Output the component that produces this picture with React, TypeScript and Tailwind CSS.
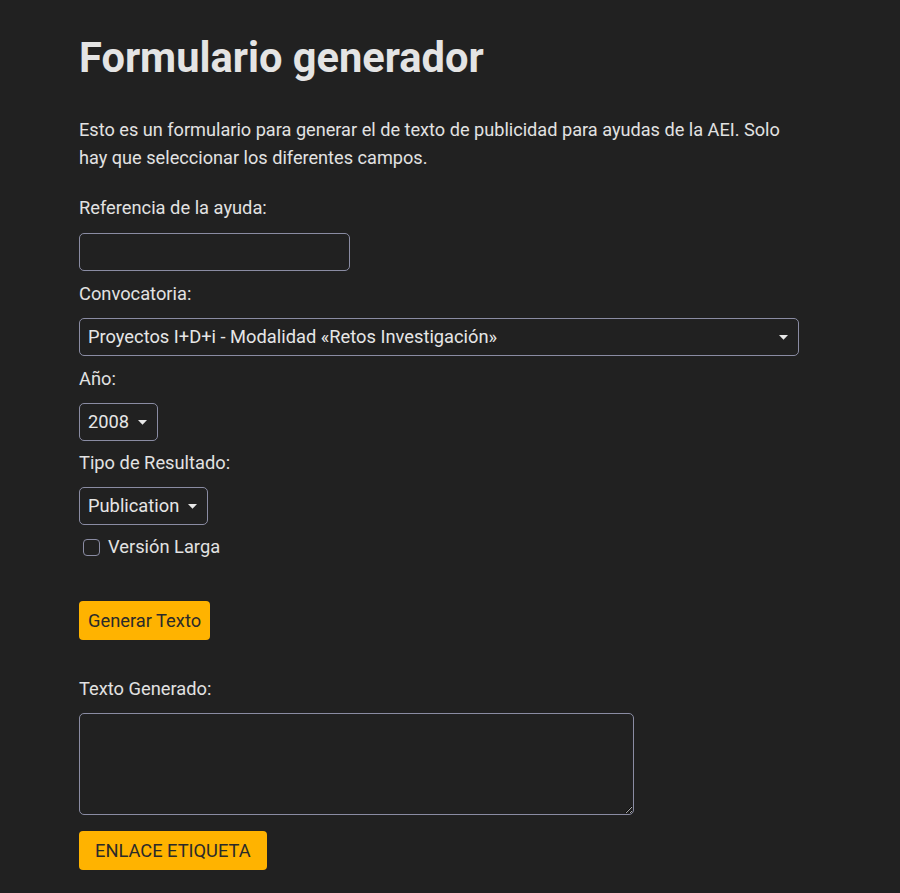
import { useState } from 'react'

const convocatorias = ['Proyectos I+D+i - Modalidad «Retos Investigación»']
const years = ['2008']
const tipos = ['Publication']

function Caret() {
  return (
    <svg width="9" height="5" viewBox="0 0 9 5" className="shrink-0">
      <path d="M0 0h9L4.5 4.8z" fill="#e8e8e8" />
    </svg>
  )
}

function Select({ value, full }: { value: string; full?: boolean }) {
  return (
    <div
      className={`flex items-center justify-between gap-[9px] h-[38px] pl-[8px] pr-[10px] border border-[#8a8ca3] rounded-[5px] text-[18.3px] text-[#e6e6e6] ${
        full ? 'w-[720px]' : 'w-fit'
      }`}
    >
      <span>{value}</span>
      <Caret />
    </div>
  )
}

export default function App() {
  const [largo, setLargo] = useState(false)
  const [ref, setRef] = useState('')

  return (
    <div className="min-h-[893px] bg-[#212121] text-[#e2e2e2] font-['Roboto',sans-serif]">
      <div className="w-[720px] ml-[79px] pt-[33px] pb-[23px]">
        <h1 className="text-[41.6px] font-bold leading-[50px] text-[#e4e4e4]">Formulario generador</h1>

        <p className="mt-[33px] text-[18.15px] leading-[28px]">
          Esto es un formulario para generar el de texto de publicidad para ayudas de la AEI. Solo hay que seleccionar los diferentes campos.
        </p>

        {/* Referencia */}
        <label className="block mt-[22px] text-[18.3px] leading-[28px]">Referencia de la ayuda:</label>
        <input
          value={ref}
          onChange={e => setRef(e.target.value)}
          className="block mt-[11px] w-[271px] h-[38px] px-2 bg-transparent border border-[#8a8ca3] rounded-[5px] outline-none text-[18px]"
        />

        {/* Convocatoria */}
        <label className="block mt-[9px] text-[18.3px] leading-[28px]">Convocatoria:</label>
        <div className="mt-[10px]">
          <Select value={convocatorias[0]} full />
        </div>

        {/* Año */}
        <label className="block mt-[9px] text-[18.3px] leading-[28px]">Año:</label>
        <div className="mt-[10px]">
          <Select value={years[0]} />
        </div>

        {/* Tipo */}
        <label className="block mt-[8px] text-[18.3px] leading-[28px]">Tipo de Resultado:</label>
        <div className="mt-[10px]">
          <Select value={tipos[0]} />
        </div>

        <label className="flex items-center gap-[8px] mt-[8px] ml-[4px] text-[18.3px] leading-[28px] cursor-pointer">
          <span
            onClick={() => setLargo(!largo)}
            className={`w-[17px] h-[17px] rounded-[4px] border border-[#8a8ca3] ${largo ? 'bg-[#ffb300]' : ''}`}
          />
          Versión Larga
        </label>

        <button className="block mt-[40px] h-[39px] px-[9px] rounded-[4px] bg-[#ffb300] text-[#2a2a2a] text-[18.3px]">
          Generar Texto
        </button>

        <label className="block mt-[35px] text-[18.3px] leading-[28px]">Texto Generado:</label>
        <textarea className="block mt-[10px] w-[555px] h-[102px] bg-transparent border border-[#8a8ca3] rounded-[5px] outline-none" />

        <button className="block mt-[16px] h-[39px] px-[16px] rounded-[4px] bg-[#ffb300] text-[#2a2a2a] text-[18.3px]">
          ENLACE ETIQUETA
        </button>
      </div>
    </div>
  )
}
